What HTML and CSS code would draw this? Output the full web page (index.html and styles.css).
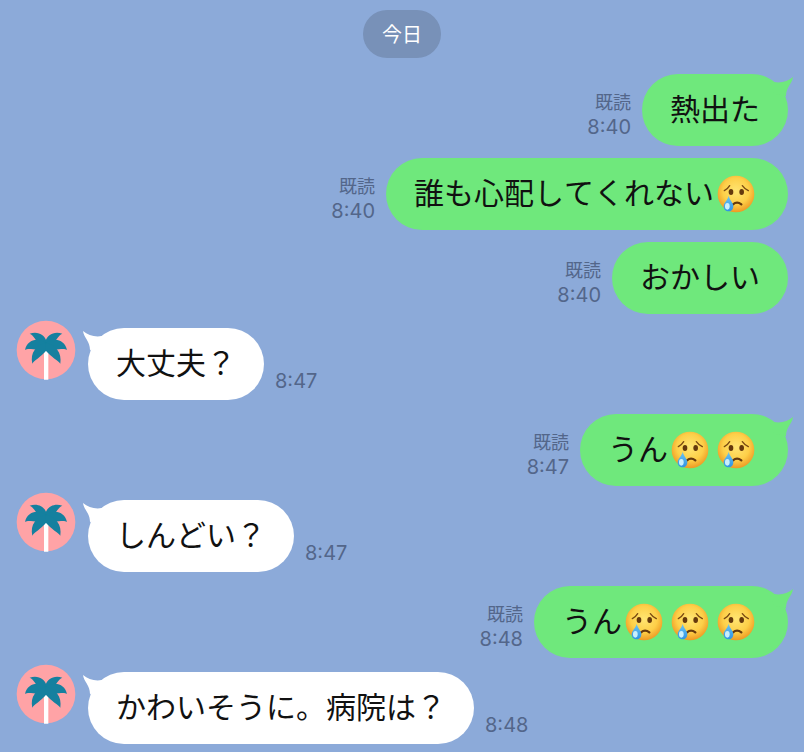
FILE: index.html
```html
<!DOCTYPE html>
<html lang="ja">
<head>
  <meta charset="UTF-8">
  <title>トーク</title>
  <meta name="viewport" content="width=device-width, initial-scale=1.0">
  <link rel="stylesheet" href="styles.css">
</head>
<body>
  <!-- shared shapes -->
  <svg class="defs" width="0" height="0" aria-hidden="true">
    <defs>
      <radialGradient id="face" cx="50%" cy="42%" r="60%">
        <stop offset="0" stop-color="#ffe573"/>
        <stop offset="0.6" stop-color="#fdcf48"/>
        <stop offset="1" stop-color="#ec9420"/>
      </radialGradient>
      <linearGradient id="drop" x1="0" y1="0" x2="0" y2="1">
        <stop offset="0" stop-color="#6cc4f2"/>
        <stop offset="1" stop-color="#2f93e4"/>
      </linearGradient>
    </defs>
    <symbol id="cry" viewBox="0 0 114 114">
      <circle cx="57" cy="57" r="55" fill="url(#face)"/>
      <path d="M22 47Q32 42 38 32M76 32Q83 42 94 47" fill="none" stroke="#7a4a12" stroke-width="4" stroke-linecap="round"/>
      <ellipse cx="42" cy="51" rx="7" ry="9" fill="#65390d"/>
      <ellipse cx="74" cy="51" rx="7" ry="9" fill="#65390d"/>
      <path d="M48 88Q60 78 73 88" fill="none" stroke="#65390d" stroke-width="7" stroke-linecap="round"/>
      <path d="M35 62C37 74 49 83 49 94C49 103 43 109 35 109C26 109 20 103 20 94C20 83 33 74 35 62Z" fill="url(#drop)"/>
      <ellipse cx="31" cy="94" rx="7" ry="10" fill="#c9effd"/>
    </symbol>
    <symbol id="palm" viewBox="0 0 180 180">
      <circle cx="90" cy="90" r="88" fill="#ffa3a6"/>
      <path d="M84 98L90 90L97 98V179H84Z" fill="#fff"/>
      <g fill="#15809f">
        <path d="M91 64C88 44 64 32 41 41C54 46 56 60 72 72L91 76Z"/>
        <path d="M89 64C92 44 116 32 139 41C126 46 124 60 108 72L89 76Z"/>
        <path d="M91 70C64 50 34 60 27 90C40 82 58 94 91 86Z"/>
        <path d="M89 70C116 50 146 60 153 90C140 82 122 94 89 86Z"/>
        <path d="M92 68C60 74 42 98 49 131C56 120 72 114 92 91Z"/>
        <path d="M88 68C120 74 138 98 133 131C124 120 108 114 88 91Z"/>
      </g>
    </symbol>
    <symbol id="tail" viewBox="0 0 26 24">
      <path d="M2 7C11 10 19 8 25 3C24 10 18 13 18 22L6 20Z"/>
    </symbol>
  </svg>

  <main class="chat">
    <div class="day">今日</div>

    <section class="group">
      <div class="message sent">
        <div class="meta"><span class="read">既読</span><time>8:40</time></div>
        <p class="bubble"><span class="text">熱出た</span><svg class="tail"><use href="#tail"/></svg></p>
      </div>
      <div class="message sent">
        <div class="meta"><span class="read">既読</span><time>8:40</time></div>
        <p class="bubble"><span class="text">誰も心配してくれない</span><svg class="emoji" role="img" aria-label="泣き顔"><use href="#cry"/></svg></p>
      </div>
      <div class="message sent">
        <div class="meta"><span class="read">既読</span><time>8:40</time></div>
        <p class="bubble"><span class="text">おかしい</span></p>
      </div>
    </section>

    <section class="group">
      <div class="message received">
        <svg class="avatar" role="img" aria-label="アイコン"><use href="#palm"/></svg>
        <p class="bubble"><span class="text">大丈夫？</span><svg class="tail"><use href="#tail"/></svg></p>
        <div class="meta"><time>8:47</time></div>
      </div>
    </section>

    <section class="group">
      <div class="message sent">
        <div class="meta"><span class="read">既読</span><time>8:47</time></div>
        <p class="bubble"><span class="text">うん</span><svg class="emoji" role="img" aria-label="泣き顔"><use href="#cry"/></svg><svg class="emoji" role="img" aria-label="泣き顔"><use href="#cry"/></svg><svg class="tail"><use href="#tail"/></svg></p>
      </div>
    </section>

    <section class="group">
      <div class="message received">
        <svg class="avatar" role="img" aria-label="アイコン"><use href="#palm"/></svg>
        <p class="bubble"><span class="text">しんどい？</span><svg class="tail"><use href="#tail"/></svg></p>
        <div class="meta"><time>8:47</time></div>
      </div>
    </section>

    <section class="group">
      <div class="message sent">
        <div class="meta"><span class="read">既読</span><time>8:48</time></div>
        <p class="bubble"><span class="text">うん</span><svg class="emoji" role="img" aria-label="泣き顔"><use href="#cry"/></svg><svg class="emoji" role="img" aria-label="泣き顔"><use href="#cry"/></svg><svg class="emoji" role="img" aria-label="泣き顔"><use href="#cry"/></svg><svg class="tail"><use href="#tail"/></svg></p>
      </div>
    </section>

    <section class="group">
      <div class="message received">
        <svg class="avatar" role="img" aria-label="アイコン"><use href="#palm"/></svg>
        <p class="bubble"><span class="text">かわいそうに。病院は？</span><svg class="tail"><use href="#tail"/></svg></p>
        <div class="meta"><time>8:48</time></div>
      </div>
    </section>
  </main>
</body>
</html>
```

FILE: styles.css
```css
body {
  margin: 0;
  background: #8caad9;
  font-family: "Noto Sans CJK JP", sans-serif;
  font-kerning: none;
  color: #111;
}

.defs {
  position: absolute;
}

.chat {
  display: flex;
  flex-direction: column;
  gap: 14px;
  padding: 10px 16px 8px;
}

.day {
  align-self: center;
  margin-bottom: 2px;
  padding: 0 19px;
  border-radius: 24px;
  background: #7891b8;
  color: #fff;
  font-size: 20px;
  line-height: 48px;
}

.group {
  display: flex;
  flex-direction: column;
  gap: 12px;
}

.message {
  display: flex;
  align-items: flex-end;
  gap: 11px;
}

.sent {
  justify-content: flex-end;
}

.bubble {
  position: relative;
  display: flex;
  align-items: center;
  margin: 0;
  padding: 16px 28px;
  border-radius: 36px;
}

.sent .bubble {
  background: #6fe87c;
}

.received .bubble {
  background: #fff;
}

.text {
  padding-bottom: 6px;
  font-size: 30px;
  line-height: 34px;
}

.tail {
  position: absolute;
  top: 0;
  width: 26px;
  height: 24px;
}

.sent .tail {
  right: -6px;
  fill: #6fe87c;
}

.received .tail {
  left: -6px;
  fill: #fff;
  transform: scaleX(-1);
}

.emoji {
  flex: none;
  width: 38px;
  height: 38px;
  margin: 0 5px 0 3px;
}

.avatar {
  flex: none;
  align-self: flex-start;
  width: 60px;
  height: 60px;
  margin: -8px 1px 0 0;
}

.meta {
  display: flex;
  flex-direction: column;
  flex: none;
  gap: 2px;
  padding-bottom: 7px;
  color: #53668a;
  line-height: 24px;
}

.sent .meta {
  align-items: flex-end;
}

.read {
  font-size: 18px;
}

time {
  font-family: Inter, sans-serif;
  font-size: 20px;
}
```
